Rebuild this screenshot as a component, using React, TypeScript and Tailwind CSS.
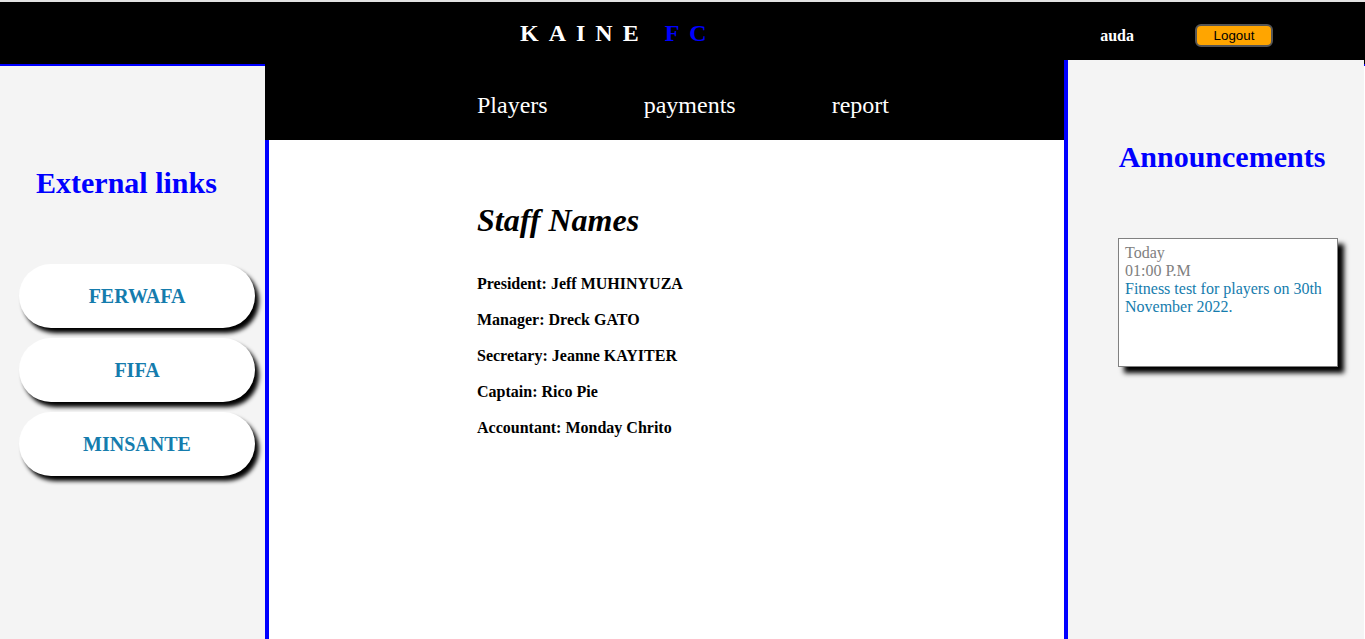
const externalLinks = ['FERWAFA', 'FIFA', 'MINSANTE'];

const navItems = ['Players', 'payments', 'report'];

const staff = [
  { role: 'President', name: 'Jeff MUHINYUZA' },
  { role: 'Manager', name: 'Dreck GATO' },
  { role: 'Secretary', name: 'Jeanne KAYITER' },
  { role: 'Captain', name: 'Rico Pie' },
  { role: 'Accountant', name: 'Monday Chrito' },
];

export default function App() {
  return (
    <div className="min-h-[639px] flex flex-col bg-white font-['Liberation_Serif',serif]">
      <div className="h-[2px] bg-[#e2e2e2]" />

      {/* top bar */}
      <header className="h-[58px] bg-black flex items-start">
        <h1 className="ml-[520px] mt-[17px] text-[24px] leading-[28px] font-bold tracking-[10px] text-white">
          KAINE <span className="text-[#0000ff]">FC</span>
        </h1>
        <span className="ml-auto mt-[22px] text-[16px] font-bold text-white">auda</span>
        <button className="ml-[61px] mr-[92px] mt-[22px] h-[23px] w-[78px] rounded-[6px] border-2 border-[#555] bg-[#ffa500] font-['Liberation_Sans',sans-serif] text-[13.33px] text-black">
          Logout
        </button>
      </header>

      <div className="flex flex-1 bg-black">
        {/* left sidebar */}
        <aside className="w-[265px] mt-[4px] border-t-2 border-[#0000ff] bg-[#f4f4f4] flex flex-col">
          <h2 className="pl-[36px] pt-[100px] text-[30px] leading-[34px] font-bold text-[#0000ff]">External links</h2>
          <div className="mt-[64px] ml-[19px] flex flex-col gap-[10px]">
            {externalLinks.map((link) => (
              <a
                key={link}
                href="#"
                className="w-[236px] h-[64px] rounded-full bg-white shadow-[4px_5px_4px_#000] flex items-center justify-center text-[20px] font-bold text-[#157cad]"
              >
                {link}
              </a>
            ))}
          </div>
        </aside>

        {/* center */}
        <main className="w-[799px] flex flex-col">
          <nav className="h-[80px] bg-black flex gap-[96px] pl-[212px] pt-[32px] text-[24px] leading-[27px] text-white">
            {navItems.map((item) => (
              <a key={item} href="#">{item}</a>
            ))}
          </nav>
          <section className="flex-1 bg-white border-l-4 border-[#0000ff] pl-[208px] pt-[62px]">
            <h2 className="text-[32px] leading-[36px] italic font-bold text-black">Staff Names</h2>
            <div className="mt-[37px] flex flex-col gap-[18px]">
              {staff.map((s) => (
                <p key={s.role} className="text-[16px] leading-[18px] font-bold text-black">
                  {s.role}: {s.name}
                </p>
              ))}
            </div>
          </section>
        </main>

        {/* right sidebar */}
        <aside className="w-[300px] border-l-4 border-[#0000ff] bg-[#f4f4f4] flex flex-col">
          <h2 className="pt-[80px] pl-[12px] text-center text-[30px] leading-[34px] font-bold text-[#0000ff]">Announcements</h2>
          <div className="mt-[64px] ml-[50px] w-[220px] h-[129px] border border-[#808080] bg-white shadow-[6px_6px_5px_#000] px-[6px] pt-[5px] text-[16px] leading-[18px]">
            <p className="text-[#808080]">Today</p>
            <p className="text-[#808080]">01:00 P.M</p>
            <p className="text-[#157cad]">Fitness test for players on 30th November 2022.</p>
          </div>
        </aside>
        <div className="w-px mt-[4px] border-t-2 border-[#0000ff] bg-white" />
      </div>
    </div>
  );
}
